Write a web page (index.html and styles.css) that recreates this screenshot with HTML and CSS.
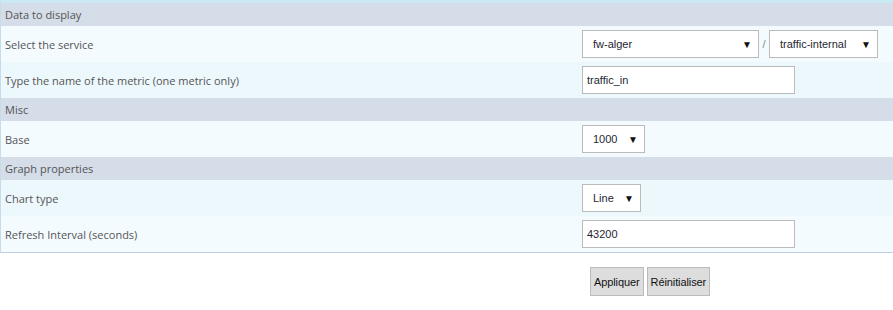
FILE: index.html
```html
<!DOCTYPE html>
<html lang="en">
<head>
    <meta charset="UTF-8">
    <title>Graph widget preferences</title>
    <link rel="stylesheet" href="styles.css">
</head>
<body>
<div class="form">
    <div class="head">Data to display</div>
    <div class="row one">
        <div class="label">Select the service</div>
        <div class="value">
            <div class="select host"><span>fw-alger</span><span class="arrow">&#9660;</span></div>
            <span class="sep">/</span>
            <div class="select svc"><span>traffic-internal</span><span class="arrow">&#9660;</span></div>
        </div>
    </div>
    <div class="row two">
        <div class="label">Type the name of the metric (one metric only)</div>
        <div class="value"><div class="input">traffic_in</div></div>
    </div>
    <div class="head">Misc</div>
    <div class="row one">
        <div class="label">Base</div>
        <div class="value">
            <div class="select base"><span>1000</span><span class="arrow">&#9660;</span></div>
        </div>
    </div>
    <div class="head">Graph properties</div>
    <div class="row two">
        <div class="label">Chart type</div>
        <div class="value">
            <div class="select chart"><span>Line</span><span class="arrow">&#9660;</span></div>
        </div>
    </div>
    <div class="row one">
        <div class="label">Refresh Interval (seconds)</div>
        <div class="value"><div class="input">43200</div></div>
    </div>
</div>
<div class="buttons">
    <button class="btn">Appliquer</button>
    <button class="btn">Réinitialiser</button>
</div>
</body>
</html>
```

FILE: styles.css
```css
body {
    margin: 0;
    background: #ffffff;
    font-family: "Open Sans", sans-serif;
    font-size: 11px;
    color: #555555;
}

.form {
    border-top: 3px solid #c9e9f5;
    border-left: 1px solid #c6dcec;
    border-bottom: 1px solid #b9d0e6;
}

.head {
    height: 23px;
    line-height: 23px;
    padding-left: 4px;
    background: #d4dde8;
}

.row {
    display: flex;
    align-items: center;
    height: 36px;
}

.row.one {
    background: #f4fbff;
}

.row.two {
    background: #edf8fd;
}

.label {
    flex: 0 0 576px;
    padding-left: 4px;
    box-sizing: border-box;
}

.value {
    display: flex;
    align-items: center;
    padding-left: 5px;
    font-family: "Liberation Sans", Arial, sans-serif;
    font-size: 11px;
    color: #1f1f33;
}

.select {
    display: flex;
    justify-content: space-between;
    align-items: center;
    box-sizing: border-box;
    height: 28px;
    background: #ffffff;
    border: 1px solid #bbbbbb;
    padding: 0 6px 0 10px;
}

.select .arrow {
    font-size: 10px;
    color: #111111;
}

.select.host {
    width: 177px;
}

.select.svc {
    width: 109px;
}

.select.base {
    width: 63px;
}

.select.chart {
    width: 59px;
}

.sep {
    width: 10px;
    text-align: center;
    color: #8a8a8a;
}

.input {
    box-sizing: border-box;
    width: 213px;
    height: 28px;
    line-height: 26px;
    padding-left: 4px;
    background: #ffffff;
    border: 1px solid #bbbbbb;
}

.buttons {
    display: flex;
    gap: 3px;
    padding: 14px 0 0 590px;
}

.btn {
    height: 29px;
    padding: 0 3px;
    margin: 0;
    font-family: "Liberation Sans", Arial, sans-serif;
    font-size: 11px;
    letter-spacing: -0.1px;
    color: #111111;
    background: #dddddd;
    border: 1px solid #bbbbbb;
    border-radius: 0;
}
```
